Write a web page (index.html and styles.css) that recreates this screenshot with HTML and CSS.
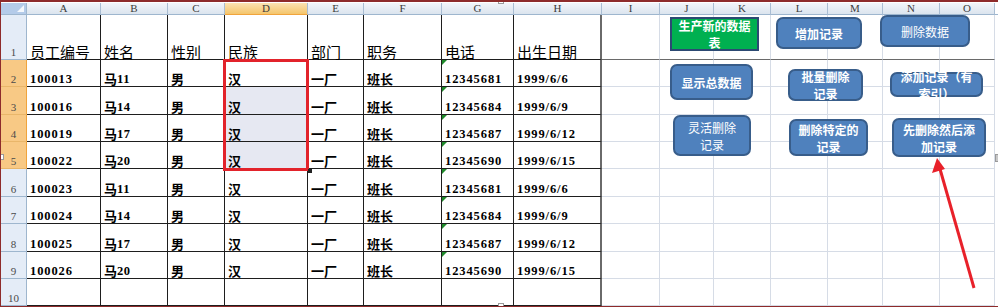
FILE: index.html
```html
<!DOCTYPE html>
<html lang="zh-CN">
<head>
    <meta charset="UTF-8">
    <title>员工表</title>
    <link rel="stylesheet" href="styles.css">
</head>
<body>
    <div class="window">
        <div class="sheet">
            <!-- column headers -->
            <div class="corner"></div>
            <div class="ch">A</div><div class="ch">B</div><div class="ch">C</div><div class="ch on">D</div>
            <div class="ch">E</div><div class="ch">F</div><div class="ch">G</div><div class="ch">H</div>
            <div class="ch">I</div><div class="ch">J</div><div class="ch">K</div><div class="ch">L</div>
            <div class="ch">M</div><div class="ch">N</div><div class="ch">O</div><div class="ch end"></div>

            <!-- row 1 -->
            <div class="rh">1</div>
            <div class="t head">员工编号</div><div class="t head">姓名</div><div class="t head">性别</div><div class="t head">民族</div>
            <div class="t head">部门</div><div class="t head">职务</div><div class="t head">电话</div><div class="t head h">出生日期</div>
            <div class="g frz"></div><div class="g frz"></div><div class="g frz"></div><div class="g frz"></div>
            <div class="g frz"></div><div class="g frz"></div><div class="g frz"></div><div class="end"></div>

            <!-- row 2 -->
            <div class="rh on">2</div>
            <div class="t num">100013</div><div class="t cn">马<span class="num">11</span></div><div class="t cn">男</div><div class="t cn">汉</div>
            <div class="t cn">一厂</div><div class="t cn">班长</div><div class="t num txt">12345681</div><div class="t num h">1999/6/6</div>
            <div class="g"></div><div class="g"></div><div class="g"></div><div class="g"></div>
            <div class="g"></div><div class="g"></div><div class="g"></div><div class="end"></div>

            <!-- row 3 -->
            <div class="rh on">3</div>
            <div class="t num">100016</div><div class="t cn">马<span class="num">14</span></div><div class="t cn">男</div><div class="t cn sel">汉</div>
            <div class="t cn">一厂</div><div class="t cn">班长</div><div class="t num txt">12345684</div><div class="t num h">1999/6/9</div>
            <div class="g"></div><div class="g"></div><div class="g"></div><div class="g"></div>
            <div class="g"></div><div class="g"></div><div class="g"></div><div class="end"></div>

            <!-- row 4 -->
            <div class="rh on">4</div>
            <div class="t num">100019</div><div class="t cn">马<span class="num">17</span></div><div class="t cn">男</div><div class="t cn sel">汉</div>
            <div class="t cn">一厂</div><div class="t cn">班长</div><div class="t num txt">12345687</div><div class="t num h">1999/6/12</div>
            <div class="g"></div><div class="g"></div><div class="g"></div><div class="g"></div>
            <div class="g"></div><div class="g"></div><div class="g"></div><div class="end"></div>

            <!-- row 5 -->
            <div class="rh on">5</div>
            <div class="t num">100022</div><div class="t cn">马<span class="num">20</span></div><div class="t cn">男</div><div class="t cn sel">汉</div>
            <div class="t cn">一厂</div><div class="t cn">班长</div><div class="t num txt">12345690</div><div class="t num h">1999/6/15</div>
            <div class="g"></div><div class="g"></div><div class="g"></div><div class="g"></div>
            <div class="g"></div><div class="g"></div><div class="g"></div><div class="end"></div>

            <!-- row 6 -->
            <div class="rh">6</div>
            <div class="t num">100023</div><div class="t cn">马<span class="num">11</span></div><div class="t cn">男</div><div class="t cn">汉</div>
            <div class="t cn">一厂</div><div class="t cn">班长</div><div class="t num txt">12345681</div><div class="t num h">1999/6/6</div>
            <div class="g"></div><div class="g"></div><div class="g"></div><div class="g"></div>
            <div class="g"></div><div class="g"></div><div class="g"></div><div class="end"></div>

            <!-- row 7 -->
            <div class="rh">7</div>
            <div class="t num">100024</div><div class="t cn">马<span class="num">14</span></div><div class="t cn">男</div><div class="t cn">汉</div>
            <div class="t cn">一厂</div><div class="t cn">班长</div><div class="t num txt">12345684</div><div class="t num h">1999/6/9</div>
            <div class="g"></div><div class="g"></div><div class="g"></div><div class="g"></div>
            <div class="g"></div><div class="g"></div><div class="g"></div><div class="end"></div>

            <!-- row 8 -->
            <div class="rh">8</div>
            <div class="t num">100025</div><div class="t cn">马<span class="num">17</span></div><div class="t cn">男</div><div class="t cn">汉</div>
            <div class="t cn">一厂</div><div class="t cn">班长</div><div class="t num txt">12345687</div><div class="t num h">1999/6/12</div>
            <div class="g"></div><div class="g"></div><div class="g"></div><div class="g"></div>
            <div class="g"></div><div class="g"></div><div class="g"></div><div class="end"></div>

            <!-- row 9 -->
            <div class="rh">9</div>
            <div class="t num">100026</div><div class="t cn">马<span class="num">20</span></div><div class="t cn">男</div><div class="t cn">汉</div>
            <div class="t cn">一厂</div><div class="t cn">班长</div><div class="t num txt">12345690</div><div class="t num h">1999/6/15</div>
            <div class="g"></div><div class="g"></div><div class="g"></div><div class="g"></div>
            <div class="g"></div><div class="g"></div><div class="g"></div><div class="end"></div>

            <!-- row 10 -->
            <div class="rh">10</div>
            <div class="t"></div><div class="t"></div><div class="t"></div><div class="t"></div>
            <div class="t"></div><div class="t"></div><div class="t"></div><div class="t h"></div>
            <div class="g"></div><div class="g"></div><div class="g"></div><div class="g"></div>
            <div class="g"></div><div class="g"></div><div class="g"></div><div class="end"></div>

            <!-- selection D2:D5 -->
            <div class="selection"><span class="fill-handle"></span></div>

            <!-- macro buttons -->
            <div class="btn green b1">生产新的数据<br>表</div>
            <div class="btn b2">增加记录</div>
            <div class="btn thin b3">删除数据</div>
            <div class="btn b4">显示总数据</div>
            <div class="btn b5">批量删除<br>记录</div>
            <div class="btn b6">添加记录（有<br>索引）</div>
            <div class="btn thin b7">灵活删除<br>记录</div>
            <div class="btn b8">删除特定的<br>记录</div>
            <div class="btn b9">先删除然后添<br>加记录</div>

            <svg class="arrow" width="997" height="303" viewBox="0 0 997 303">
                <line x1="973" y1="285" x2="939" y2="166" stroke="#e8212a" stroke-width="3"/>
                <polygon points="936,155 931,170 944,166" fill="#e8212a"/>
            </svg>
        </div>

        <span class="handle top"></span>
        <span class="handle bottom"></span>
        <span class="handle left"></span>
        <span class="handle right"></span>
    </div>
</body>
</html>
```

FILE: styles.css
```css
* {
    margin: 0;
    padding: 0;
    box-sizing: border-box;
}

body {
    background: #ffffff;
    font-family: "Noto Sans CJK SC", sans-serif;
}

.window {
    position: relative;
    width: 998px;
    height: 307px;
    border-top: 2px solid #8e2b2b;
    border-left: 1px solid #8e2b2b;
    border-bottom: 1px solid #8e2b2b;
    padding-top: 1px;
    background: #ffffff;
    overflow: hidden;
}

.sheet {
    position: relative;
    display: grid;
    grid-template-columns: 26px 74px 67px 57px 83px 56px 78px 72px 88px 58px 54px 57px 57px 55px 57px 55px 3px;
    grid-template-rows: 12px 45px 27px 28px 27px 27px 28px 27px 28px 27px 27px;
}

/* headers */
.corner {
    position: relative;
    background: #b4cbe9;
    border-right: 1px solid #9eb6ce;
    border-bottom: 1px solid #9eb6ce;
}

.corner::after {
    content: "";
    position: absolute;
    right: 2px;
    bottom: 2px;
    border-left: 7px solid transparent;
    border-bottom: 7px solid #f4f8fd;
}

.ch {
    display: flex;
    align-items: center;
    justify-content: center;
    background: linear-gradient(#f2f5fa, #dbe4ee);
    border-right: 1px solid #a9bdd3;
    border-bottom: 1px solid #9eb6ce;
    font-family: "Liberation Serif", serif;
    font-size: 11px;
    color: #3c3c3c;
    line-height: 1;
}

.ch.on {
    background: linear-gradient(#fbe3b2, #f4c56c);
    border-bottom-color: #f0a43c;
}

.ch.end {
    border-right: none;
}

.rh {
    display: flex;
    align-items: flex-end;
    justify-content: center;
    padding-bottom: 1px;
    background: #e4ecf7;
    border-right: 1px solid #9eb6ce;
    border-bottom: 1px solid #9eb6ce;
    font-family: "Liberation Serif", serif;
    font-size: 11px;
    color: #4a4a4a;
    line-height: 1;
}

.rh.on {
    background: #f8c985;
    border-right-color: #f0a43c;
    border-bottom-color: #e9b66a;
}

/* cells */
.t,
.g {
    display: flex;
    align-items: flex-end;
    padding: 0 0 1px 3px;
    white-space: nowrap;
    color: #000;
}

.t {
    border-right: 1px solid #1e1e1e;
    border-bottom: 1px solid #1e1e1e;
}

.t.h {
    border-right: 2px solid #6a6a6a;
}

.g {
    border-right: 1px solid #d6dce6;
    border-bottom: 1px solid #d6dce6;
}

.g.frz {
    border-bottom: 1px solid #6a6a6a;
}

.end {
    background: #ffffff;
}

.head {
    font-size: 15px;
    font-weight: 400;
    line-height: 1;
    padding-bottom: 0;
}

.num {
    font-family: "Liberation Serif", "Noto Sans CJK SC", serif;
    font-size: 12.5px;
    font-weight: 700;
    letter-spacing: 0.9px;
    line-height: 1;
}

.cn {
    font-size: 13px;
    font-weight: 700;
    line-height: 1;
}

.cn .num {
    letter-spacing: 0.6px;
}

.sel {
    background: #e6e8f2;
}

.txt {
    position: relative;
}

.txt::before {
    content: "";
    position: absolute;
    left: 0;
    top: 0;
    border-top: 5px solid #1f8a2b;
    border-right: 5px solid transparent;
}

/* selection frame */
.selection {
    position: absolute;
    left: 222px;
    top: 56px;
    width: 86px;
    height: 112px;
    border: 3px solid #e2232b;
}

.fill-handle {
    position: absolute;
    right: -6px;
    bottom: -5px;
    width: 4px;
    height: 4px;
    background: #222;
}

/* macro buttons */
.btn {
    position: absolute;
    display: flex;
    align-items: center;
    justify-content: center;
    text-align: center;
    background: #4f81bd;
    border: 2px solid #385d8a;
    border-radius: 7px;
    color: #ffffff;
    font-size: 12px;
    font-weight: 700;
    line-height: 17px;
    white-space: nowrap;
}

.btn.thin {
    font-weight: 400;
}

.btn.green {
    background: #00b050;
    border-color: #2c4a73;
    border-radius: 0;
}

.b1 { left: 669px; top: 14px; width: 89px; height: 34px; }
.b2 { left: 775px; top: 14px; width: 86px; height: 32px; }
.b3 { left: 879px; top: 12px; width: 90px; height: 32px; }
.b4 { left: 669px; top: 61px; width: 83px; height: 36px; }
.b5 { left: 787px; top: 66px; width: 75px; height: 32px; }
.b6 { left: 889px; top: 69px; width: 93px; height: 25px; }
.b7 { left: 672px; top: 112px; width: 78px; height: 41px; }
.b8 { left: 788px; top: 116px; width: 79px; height: 37px; }
.b9 { left: 891px; top: 115px; width: 94px; height: 39px; }

.arrow {
    position: absolute;
    left: 0;
    top: 0;
    pointer-events: none;
}

/* picture handles */
.handle {
    position: absolute;
    width: 6px;
    height: 5px;
    background: #ffffff;
    border: 1px solid #9a9a9a;
}

.handle.top { left: 497px; top: -3px; }
.handle.bottom { left: 497px; bottom: -2px; }
.handle.left { left: -2px; top: 152px; width: 5px; height: 6px; }
.handle.right { right: -1px; top: 152px; width: 4px; height: 8px; background: #c8c8c8; }
```
